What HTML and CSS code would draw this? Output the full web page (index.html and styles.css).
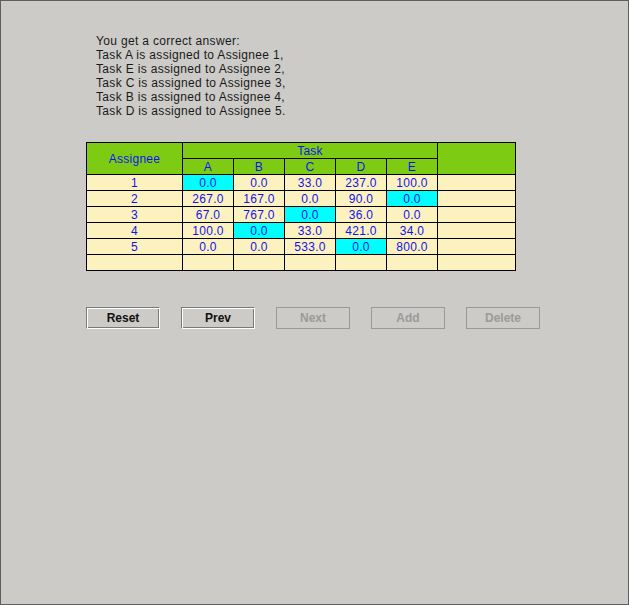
FILE: index.html
```html
<!DOCTYPE html>
<html>
<head>
<meta charset="utf-8">
<link rel="stylesheet" href="styles.css">
</head>
<body>
<div class="frame">
  <div class="message">
    <div>You get a correct answer:</div>
    <div>Task A is assigned to Assignee 1,</div>
    <div>Task E is assigned to Assignee 2,</div>
    <div>Task C is assigned to Assignee 3,</div>
    <div>Task B is assigned to Assignee 4,</div>
    <div>Task D is assigned to Assignee 5.</div>
  </div>
  <div class="grid">
    <div class="cell head assignee">Assignee</div>
    <div class="cell head task">Task</div>
    <div class="cell head extra"></div>
    <div class="cell head">A</div>
    <div class="cell head">B</div>
    <div class="cell head">C</div>
    <div class="cell head">D</div>
    <div class="cell head">E</div>

    <div class="cell">1</div><div class="cell hit">0.0</div><div class="cell">0.0</div><div class="cell">33.0</div><div class="cell">237.0</div><div class="cell">100.0</div><div class="cell"></div>
    <div class="cell">2</div><div class="cell">267.0</div><div class="cell">167.0</div><div class="cell">0.0</div><div class="cell">90.0</div><div class="cell hit">0.0</div><div class="cell"></div>
    <div class="cell">3</div><div class="cell">67.0</div><div class="cell">767.0</div><div class="cell hit">0.0</div><div class="cell">36.0</div><div class="cell">0.0</div><div class="cell"></div>
    <div class="cell">4</div><div class="cell">100.0</div><div class="cell hit">0.0</div><div class="cell">33.0</div><div class="cell">421.0</div><div class="cell">34.0</div><div class="cell"></div>
    <div class="cell">5</div><div class="cell">0.0</div><div class="cell">0.0</div><div class="cell">533.0</div><div class="cell hit">0.0</div><div class="cell">800.0</div><div class="cell"></div>
    <div class="cell"></div><div class="cell"></div><div class="cell"></div><div class="cell"></div><div class="cell"></div><div class="cell"></div><div class="cell"></div>
  </div>
  <div class="buttons">
    <button class="btn">Reset</button>
    <button class="btn">Prev</button>
    <button class="btn" disabled>Next</button>
    <button class="btn" disabled>Add</button>
    <button class="btn" disabled>Delete</button>
  </div>
</div>
</body>
</html>
```
FILE: styles.css
```css
html, body {
  margin: 0;
  padding: 0;
}
body {
  width: 629px;
  height: 605px;
  background: #cccbc8;
  font-family: "Liberation Sans", Arial, sans-serif;
  font-size: 12px;
}
.frame {
  box-sizing: border-box;
  width: 629px;
  height: 605px;
  border: 1px solid #5e5e5e;
  padding: 33px 0 0 85px;
}
.message {
  padding-left: 10px;
  line-height: 14px;
  color: #1a1a1a;
  letter-spacing: 0.33px;
}
.grid {
  margin-top: 24px;
  display: grid;
  grid-template-columns: 95px repeat(5, 50px) 77px;
  grid-template-rows: repeat(8, 15px);
  gap: 1px;
  padding: 1px;
  background: #000;
  width: max-content;
}
.cell {
  box-sizing: border-box;
  background: #fcf2c0;
  color: #1212f0;
  text-align: center;
  line-height: 14px;
  padding-top: 1px;
  font-size: 12px;
  letter-spacing: 0.25px;
}
.cell.hit {
  background: #00ffff;
}
.head {
  background: #7ecb14;
}
.assignee {
  grid-row: 1 / span 2;
  line-height: 30px;
}
.task {
  grid-column: 2 / span 5;
}
.extra {
  grid-column: 7;
  grid-row: 1 / span 2;
}
.buttons {
  margin-top: 36px;
  display: flex;
  gap: 21px;
}
.btn {
  box-sizing: border-box;
  width: 74px;
  height: 22px;
  margin: 0;
  padding: 0;
  background: #cccbc8;
  border: 1px solid #7a7a7a;
  border-right-color: #ffffff;
  border-bottom-color: #ffffff;
  box-shadow: inset 1px 1px 0 #ffffff, inset -1px -1px 0 #7a7a7a;
  font-family: "Liberation Sans", Arial, sans-serif;
  font-size: 12px;
  font-weight: bold;
  color: #111;
}
.btn:disabled {
  border: 1px solid #999999;
  box-shadow: none;
  color: #9a9a9a;
}
```
